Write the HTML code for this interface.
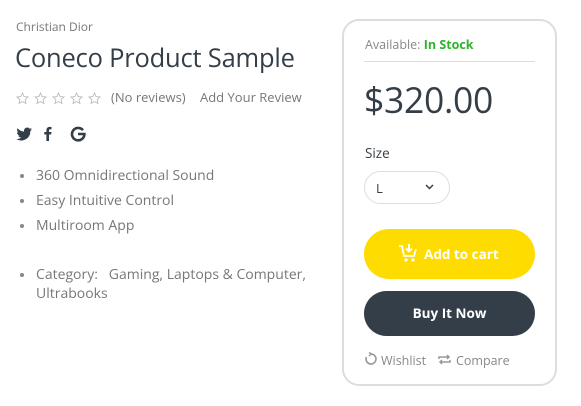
<!DOCTYPE html>
<html><head><meta charset="utf-8"><style>
*{margin:0;padding:0;box-sizing:border-box}
body{width:581px;height:406px;background:#fff;font-family:"Open Sans","DejaVu Sans","Liberation Sans",sans-serif;color:#333e48;position:relative;overflow:hidden}
.a{position:absolute;white-space:nowrap}
.g{color:#777}
.d{position:absolute;width:4px;height:4px;border-radius:2px;background:#888;left:20px}
</style></head><body>
<div class="a g" style="left:16px;top:18px;font-size:12px">Christian Dior</div>
<div class="a" style="left:15px;top:41px;font-size:25.5px;color:#333e48;letter-spacing:-0.2px">Coneco Product Sample</div>
<div class="a" style="left:16px;top:89px;">
<svg width="88" height="14" viewBox="0 0 88 14">
<g fill="none" stroke="#bbb" stroke-width="0.9">
<path id="s" d="M6.5 1l1.6 3.6 3.9.4-2.9 2.6.9 3.9-3.5-2-3.5 2 .9-3.9L1 5l3.9-.4z"/>
<use href="#s" x="18"/><use href="#s" x="36"/><use href="#s" x="54"/><use href="#s" x="72"/>
</g></svg></div>
<div class="a g" style="left:111px;top:88px;font-size:13px">(No reviews)</div>
<div class="a g" style="left:200px;top:88px;font-size:13px">Add Your Review</div>
<svg class="a" style="left:16px;top:126px" width="70" height="16" viewBox="0 0 70 16">
<path fill="#333e48" d="M16 3.2a6 6 0 0 1-1.8.5 3.2 3.2 0 0 0 1.4-1.8 6 6 0 0 1-2 .8A3.2 3.2 0 0 0 8.1 5.6 9 9 0 0 1 1.5 2.3a3.2 3.2 0 0 0 1 4.3 3 3 0 0 1-1.5-.4 3.2 3.2 0 0 0 2.6 3.2 3 3 0 0 1-1.4 0 3.2 3.2 0 0 0 3 2.2A6.4 6.4 0 0 1 .4 13a9 9 0 0 0 13.9-7.9A6.5 6.5 0 0 0 16 3.2z"/>
<path fill="#333e48" d="M33 15V8.5h2.2l.3-2.5H33V4.4c0-.7.2-1.2 1.2-1.2h1.3V1a17 17 0 0 0-1.9-.1c-1.9 0-3.2 1.2-3.2 3.3V6h-2.1v2.5h2.1V15z"/>
<path fill="none" stroke="#333e48" stroke-width="2.6" d="M67 4.2A6.2 6.2 0 1 0 68.4 8H62"/>
</svg>
<span class="d" style="top:174px"></span>
<span class="d" style="top:199px"></span>
<span class="d" style="top:224px"></span>
<span class="d" style="top:273px"></span>
<div class="a g" style="left:36px;top:166px;font-size:14px">360 Omnidirectional Sound</div>
<div class="a g" style="left:36px;top:191px;font-size:14px">Easy Intuitive Control</div>
<div class="a g" style="left:36px;top:216px;font-size:14px">Multiroom App</div>
<div class="a g" style="left:36px;top:265px;font-size:14px">Category: &nbsp;&nbsp;Gaming, Laptops &amp; Computer,</div>
<div class="a g" style="left:36px;top:284px;font-size:14px">Ultrabooks</div>

<div class="a" style="left:342px;top:19px;width:215px;height:367px;border:2px solid #ddd;border-radius:17px"></div>
<div class="a" style="left:365px;top:36px;font-size:12.5px;color:#888">Available: <b style="color:#2bb52b">In Stock</b></div>
<div class="a" style="left:364px;top:61px;width:171px;height:1px;background:#ddd"></div>
<div class="a" style="left:364px;top:76px;font-size:35.5px;color:#333e48;letter-spacing:-0.3px">$320.00</div>
<div class="a" style="left:365px;top:144px;font-size:13.5px;color:#333e48">Size</div>
<div class="a" style="left:364px;top:171px;width:86px;height:33px;border:1px solid #ddd;border-radius:17px"></div>
<div class="a" style="left:376px;top:179px;font-size:13px">L</div>
<svg class="a" style="left:425px;top:184px" width="9" height="6"><path d="M1 1l3.5 3.5L8 1" fill="none" stroke="#333e48" stroke-width="1.5"/></svg>
<div class="a" style="left:364px;top:229px;width:171px;height:50px;background:#fedc00;border-radius:25px"></div>
<svg class="a" style="left:398px;top:243px" width="20" height="20" viewBox="0 0 20 20"><g fill="none" stroke="#fff" stroke-width="1.8"><path d="M1 3h3l2 10h10l2-7"/><path d="M11 1v7M8 5.5l3 3 3-3"/></g><circle cx="8" cy="17" r="1.6" fill="#fff"/><circle cx="15" cy="17" r="1.6" fill="#fff"/></svg>
<div class="a" style="left:424px;top:245px;font-size:13.5px;font-weight:bold;color:#fff">Add to cart</div>
<div class="a" style="left:364px;top:291px;width:171px;height:45px;background:#333e48;border-radius:23px"></div>
<div class="a" style="left:364px;top:304px;width:171px;text-align:center;font-size:13.5px;font-weight:bold;color:#fff">Buy It Now</div>
<svg class="a" style="left:364px;top:352px" width="14" height="14" viewBox="0 0 14 14"><path d="M7 2a5 5 0 1 1-4.6 3" fill="none" stroke="#999" stroke-width="1.6"/><path d="M5 0.5l2.5 1.5L5 4" fill="none" stroke="#999" stroke-width="1.4"/></svg>
<div class="a" style="left:381px;top:352px;font-size:12.5px;color:#888">Wishlist</div>
<svg class="a" style="left:437px;top:353px" width="15" height="13" viewBox="0 0 15 13"><g fill="none" stroke="#999" stroke-width="1.5"><path d="M2 6V4h10M10 2l2 2-2 2"/><path d="M13 7v2H3M5 11L3 9l2-2"/></g></svg>
<div class="a" style="left:456px;top:352px;font-size:12.5px;color:#888">Compare</div>
</body></html>
